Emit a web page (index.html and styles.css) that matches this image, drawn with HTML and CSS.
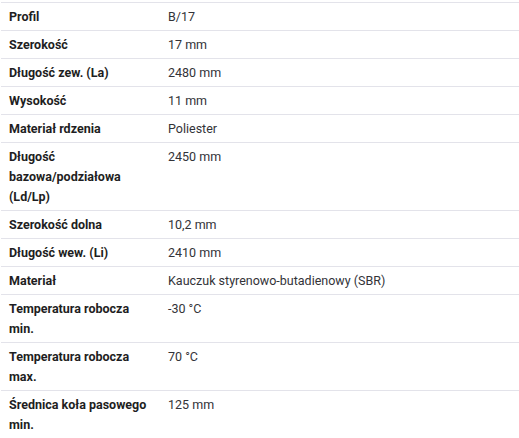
FILE: index.html
```html
<!DOCTYPE html>
<html lang="pl">
<head>
<meta charset="utf-8">
<link rel="stylesheet" href="styles.css">
</head>
<body>
<table class="specs">
  <tbody>
    <tr><th>Profil</th><td>B/17</td></tr>
    <tr><th>Szerokość</th><td>17 mm</td></tr>
    <tr><th>Długość zew. (La)</th><td>2480 mm</td></tr>
    <tr><th>Wysokość</th><td>11 mm</td></tr>
    <tr><th>Materiał rdzenia</th><td>Poliester</td></tr>
    <tr><th>Długość bazowa/podziałowa (Ld/Lp)</th><td>2450 mm</td></tr>
    <tr><th>Szerokość dolna</th><td>10,2 mm</td></tr>
    <tr><th>Długość wew. (Li)</th><td>2410 mm</td></tr>
    <tr><th>Materiał</th><td>Kauczuk styrenowo-butadienowy (SBR)</td></tr>
    <tr><th>Temperatura robocza min.</th><td>-30 °C</td></tr>
    <tr><th>Temperatura robocza max.</th><td>70 °C</td></tr>
    <tr><th>Średnica koła pasowego min.</th><td>125 mm</td></tr>
  </tbody>
</table>
</body>
</html>
```
FILE: styles.css
```css
html, body {
  margin: 0;
  padding: 0;
  background: #ffffff;
}
body {
  padding: 2px 0 0 1px;
  font-family: Roboto, "Liberation Sans", sans-serif;
  font-size: 12.5px;
  color: #222226;
}
.specs {
  width: 518px;
  border-collapse: collapse;
  border-top: 1px solid #e3e3ea;
}
.specs tr {
  border-bottom: 1px solid #e3e3ea;
}
.specs th,
.specs td {
  vertical-align: top;
  text-align: left;
  line-height: 20px;
  padding: 4px 8px 3px 8px;
}
.specs th {
  width: 143px;
  font-weight: 700;
  color: #1e1e22;
}
.specs td {
  font-weight: 400;
  color: #333338;
}
```
